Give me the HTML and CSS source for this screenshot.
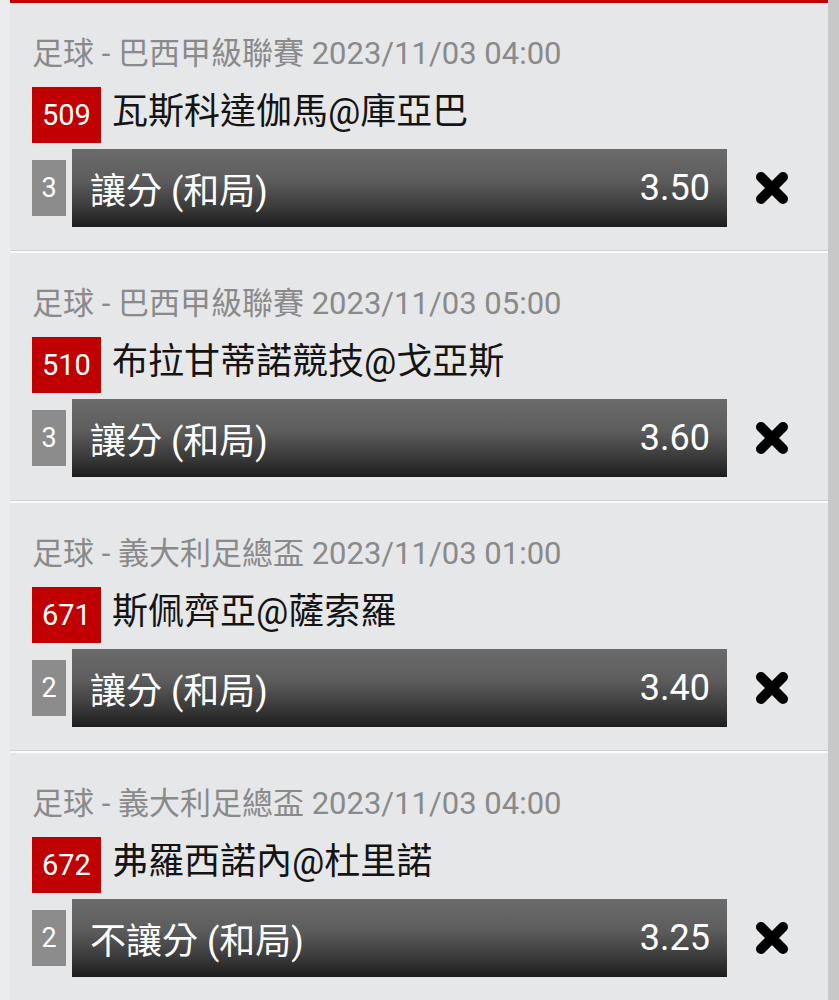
FILE: index.html
```html
<!DOCTYPE html>
<html lang="zh-Hant">
<head>
    <meta charset="UTF-8">
    <meta name="viewport" content="width=device-width, initial-scale=1.0">
    <title>投注單</title>
    <link rel="stylesheet" href="styles.css">
</head>
<body>

    <div class="screen">
        <div class="slip">

            <!-- 509 -->
            <div class="bet">
                <div class="bet-meta">足球 - 巴西甲級聯賽 2023/11/03 04:00</div>
                <div class="bet-match">
                    <span class="match-no">509</span>
                    <span class="match-name">瓦斯科達伽馬@庫亞巴</span>
                </div>
                <div class="bet-pick">
                    <span class="pick-count">3</span>
                    <div class="pick-bar">
                        <span class="pick-type">讓分 (和局)</span>
                        <span class="pick-odds">3.50</span>
                    </div>
                    <button type="button" class="pick-remove" aria-label="移除">
                        <svg width="36" height="36" viewBox="0 0 36 36"><path d="M7 7L29 29M29 7L7 29"/></svg>
                    </button>
                </div>
            </div>

            <!-- 510 -->
            <div class="bet">
                <div class="bet-meta">足球 - 巴西甲級聯賽 2023/11/03 05:00</div>
                <div class="bet-match">
                    <span class="match-no">510</span>
                    <span class="match-name">布拉甘蒂諾競技@戈亞斯</span>
                </div>
                <div class="bet-pick">
                    <span class="pick-count">3</span>
                    <div class="pick-bar">
                        <span class="pick-type">讓分 (和局)</span>
                        <span class="pick-odds">3.60</span>
                    </div>
                    <button type="button" class="pick-remove" aria-label="移除">
                        <svg width="36" height="36" viewBox="0 0 36 36"><path d="M7 7L29 29M29 7L7 29"/></svg>
                    </button>
                </div>
            </div>

            <!-- 671 -->
            <div class="bet">
                <div class="bet-meta">足球 - 義大利足總盃 2023/11/03 01:00</div>
                <div class="bet-match">
                    <span class="match-no">671</span>
                    <span class="match-name">斯佩齊亞@薩索羅</span>
                </div>
                <div class="bet-pick">
                    <span class="pick-count">2</span>
                    <div class="pick-bar">
                        <span class="pick-type">讓分 (和局)</span>
                        <span class="pick-odds">3.40</span>
                    </div>
                    <button type="button" class="pick-remove" aria-label="移除">
                        <svg width="36" height="36" viewBox="0 0 36 36"><path d="M7 7L29 29M29 7L7 29"/></svg>
                    </button>
                </div>
            </div>

            <!-- 672 -->
            <div class="bet">
                <div class="bet-meta">足球 - 義大利足總盃 2023/11/03 04:00</div>
                <div class="bet-match">
                    <span class="match-no">672</span>
                    <span class="match-name">弗羅西諾內@杜里諾</span>
                </div>
                <div class="bet-pick">
                    <span class="pick-count">2</span>
                    <div class="pick-bar">
                        <span class="pick-type">不讓分 (和局)</span>
                        <span class="pick-odds">3.25</span>
                    </div>
                    <button type="button" class="pick-remove" aria-label="移除">
                        <svg width="36" height="36" viewBox="0 0 36 36"><path d="M7 7L29 29M29 7L7 29"/></svg>
                    </button>
                </div>
            </div>

        </div>
        <div class="rail"></div>
    </div>

</body>
</html>
```

FILE: styles.css
```css
body {
    font-family: Roboto, "Noto Sans CJK TC", sans-serif;
    background-color: #ebeced;
    margin: 0;
    padding: 0;
    height: 1000px;
    overflow: hidden;
}

.screen {
    display: flex;
    padding-left: 10px;
    height: 1000px;
}

.slip {
    flex: 1;
    border-top: 3px solid #c10000;
    background-color: #fbfbfb;
}

.rail {
    width: 11px;
    background-color: #c8c8c8;
}

.bet {
    background-color: #e6e7e9;
    padding: 31px 11px 23px 22px;
    border-bottom: 1px solid #cfd0d2;
    margin-bottom: 2px;
}

.bet-meta {
    font-size: 31px;
    line-height: 40px;
    color: #8a8a8a;
    white-space: nowrap;
}

.bet-match {
    display: flex;
    align-items: center;
    margin-top: 13px;
    height: 56px;
}

.match-no {
    background-color: #c00000;
    color: #fff;
    font-size: 29px;
    line-height: 56px;
    height: 56px;
    padding: 0 10px 0 10px;
}

.match-name {
    font-size: 36px;
    line-height: 50px;
    color: #141414;
    margin-left: 11px;
    margin-top: -6px;
    white-space: nowrap;
}

.bet-pick {
    display: flex;
    align-items: center;
    margin-top: 6px;
}

.pick-count {
    width: 34px;
    height: 56px;
    line-height: 56px;
    text-align: center;
    background-color: #8c8c8c;
    color: #fff;
    font-size: 27px;
}

.pick-bar {
    flex: 1;
    margin-left: 6px;
    height: 78px;
    display: flex;
    align-items: center;
    justify-content: space-between;
    padding: 0 17px 0 18px;
    color: #fff;
    font-size: 36px;
    background: linear-gradient(to bottom, #6b6b6b 0%, #5d5d5d 40%, #3a3a3a 75%, #1d1d1d 100%);
}

.pick-remove {
    width: 90px;
    height: 78px;
    border: none;
    background: none;
    padding: 0;
    display: flex;
    align-items: center;
    justify-content: center;
    cursor: pointer;
}

.pick-remove path {
    stroke: #000;
    stroke-width: 10;
    stroke-linecap: round;
    fill: none;
}
```
